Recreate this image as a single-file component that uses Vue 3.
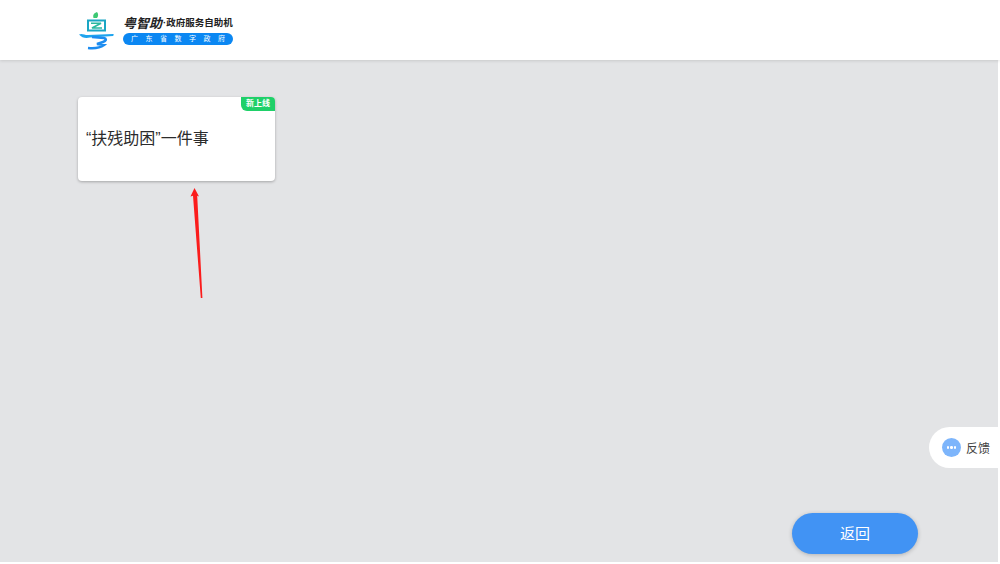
<template>
  <div class="page">
    <header class="topbar">
      <svg class="logo-mark" width="38" height="38" viewBox="0 0 38 38">
        <path d="M15.500 6c-1-3 .5-5 3.500-6 1.500 2 1.500 4 0 6z" fill="#3cc873" />
        <path d="M10 8.500h17v10H10z" fill="none" stroke="#1aa6c4" stroke-width="2" />
        <path d="M13 11.200h10l-9 4.800h10" fill="none" stroke="#2ab8a0" stroke-width="1.600" />
        <path d="M1 22.500c3-1.500 5 .5 9 .5l25-1c1 0 1 1 0 2l-23 1.500c-4 1-8 .5-11-3z" fill="#1ea4ee" />
        <path d="M14 25l12 1c3 1 2 3-1 4l-6 2 7 1c-4 3-11 3.500-16 3" fill="none" stroke="#1c8cf0" stroke-width="2.500" />
      </svg>
      <div class="brand">
        <div class="brand-name"><b>粤智助</b><span>·政府服务自助机</span></div>
        <div class="brand-pill"><span v-for="c in pillChars" :key="c">{{ c }}</span></div>
      </div>
    </header>

    <main class="content">
      <div class="card">
        <span class="card-badge">新上线</span>
        <span class="card-title">“扶残助困”一件事</span>
      </div>
      <button class="back-btn">返回</button>

      <svg class="arrow" width="14" height="112" viewBox="0 0 14 112">
        <path d="M4.500 0 9 8.500 7.200 7.800 12.400 110 10.800 110 3 7.800 0.500 8.500z" fill="#fb1c1c" />
      </svg>

      <div class="feedback">
        <span class="feedback-dot"><i></i><i></i><i></i></span>
        <span>反馈</span>
      </div>
    </main>
  </div>
</template>

<script setup>
const pillChars = ['广', '东', '省', '数', '字', '政', '府']
</script>

<style>
html, body { margin: 0; background: #fff; }
</style>

<style scoped>
.page {
  width: 1000px;
  height: 564px;
  display: flex;
  flex-direction: column;
  box-sizing: border-box;
  padding: 0 2px 2px 0;
  font-family: "Liberation Sans", "Noto Sans CJK SC", sans-serif;
  overflow: hidden;
}

.topbar {
  height: 60px;
  margin-right: -2px;
  flex-shrink: 0;
  background: #fff;
  display: flex;
  align-items: center;
  padding-left: 78px;
  box-shadow: 0 1px 3px rgba(0, 0, 0, 0.12);
  position: relative;
  z-index: 1;
}

.logo-mark { margin: 2px 7px 0 0; }

.brand {
  display: flex;
  flex-direction: column;
  width: 110px;
  margin-top: -3px;
}
.brand-name {
  display: flex;
  align-items: center;
  height: 20px;
  color: #222;
  white-space: nowrap;
}
.brand-name b { font-size: 13px; font-style: italic; font-weight: 700; }
.brand-name span { font-size: 9.500px; font-weight: 700; margin-left: 1px; }

.brand-pill {
  height: 12px;
  margin-top: 1px;
  padding: 0 8px;
  border-radius: 6px;
  background: #0b87f2;
  color: #fff;
  font-size: 7px;
  line-height: 12px;
  display: flex;
  justify-content: space-between;
}

.content {
  flex: 1;
  position: relative;
  background: #e3e4e6;
  padding: 37px 80px 8px 78px;
  display: flex;
  flex-direction: column;
  align-items: flex-start;
}

.card {
  width: 197px;
  height: 84px;
  position: relative;
  background: #fff;
  border-radius: 4px;
  box-shadow: 0 1px 3px rgba(0, 0, 0, 0.28);
  display: flex;
  align-items: center;
  padding: 0 0 5px 8px;
  box-sizing: border-box;
}
.card-title { font-size: 16px; color: #2b2b2b; white-space: nowrap; }
.card-badge {
  position: absolute;
  top: 0;
  right: 0;
  width: 34px;
  height: 14px;
  background: #1fd069;
  border-radius: 0 4px 0 6px;
  color: #fff;
  font-size: 8px;
  line-height: 14px;
  text-align: center;
  font-weight: 700;
}

.back-btn {
  margin-top: auto;
  align-self: flex-end;
  width: 126px;
  height: 41px;
  border: none;
  border-radius: 21px;
  padding: 0 0 2px;
  background: #4193f4;
  color: #fff;
  font-family: inherit;
  font-size: 15px;
  box-shadow: 0 1px 4px rgba(0, 0, 0, 0.22);
}

.arrow {
  position: absolute;
  left: 190px;
  top: 128px;
}

.feedback {
  position: absolute;
  right: -2px;
  top: 367px;
  width: 71px;
  height: 41px;
  box-sizing: border-box;
  padding-left: 13px;
  background: #fff;
  border-radius: 21px 0 0 21px;
  display: flex;
  align-items: center;
  gap: 5px;
  font-size: 12px;
  color: #444;
}
.feedback-dot {
  width: 19px;
  height: 19px;
  border-radius: 50%;
  background: #7db5fb;
  display: flex;
  align-items: center;
  justify-content: center;
  gap: 1px;
}
.feedback-dot i {
  width: 2.500px;
  height: 2.500px;
  border-radius: 50%;
  background: #fff;
}
</style>
